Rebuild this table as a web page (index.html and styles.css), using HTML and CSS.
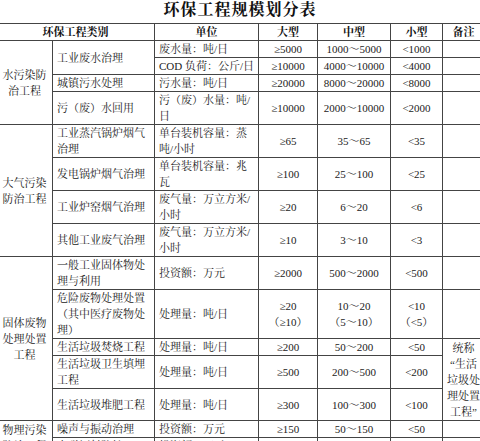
FILE: index.html
```html
<!DOCTYPE html>
<html lang="zh-CN">
<head>
<meta charset="utf-8">
<title>环保工程规模划分表</title>
<link rel="stylesheet" href="styles.css">
</head>
<body>
<h1 class="title">环保工程规模划分表</h1>
<table class="grid">
  <colgroup>
    <col class="w-cat"><col class="w-item"><col class="w-unit"><col class="w-big"><col class="w-mid"><col class="w-small"><col class="w-note">
  </colgroup>
  <thead>
    <tr><th colspan="2">环保工程类别</th><th>单位</th><th>大型</th><th>中型</th><th>小型</th><th>备注</th></tr>
  </thead>
  <tbody>
    <tr>
      <td rowspan="4" class="cat">水污染防<br>治工程</td>
      <td rowspan="2">工业废水治理</td>
      <td>废水量：吨/日</td><td class="num">≥5000</td><td class="num">1000～5000</td><td class="num">&lt;1000</td><td></td>
    </tr>
    <tr><td>COD 负荷：公斤/日</td><td class="num">≥10000</td><td class="num">4000～10000</td><td class="num">&lt;4000</td><td></td></tr>
    <tr><td>城镇污水处理</td><td>污水量：吨/日</td><td class="num">≥20000</td><td class="num">8000～20000</td><td class="num">&lt;8000</td><td></td></tr>
    <tr><td>污（废）水回用</td><td>污（废）水量：吨/<br>日</td><td class="num">≥10000</td><td class="num">2000～10000</td><td class="num">&lt;2000</td><td></td></tr>

    <tr>
      <td rowspan="4" class="cat">大气污染<br>防治工程</td>
      <td>工业蒸汽锅炉烟气<br>治理</td><td>单台装机容量：蒸<br>吨/小时</td><td class="num">≥65</td><td class="num">35～65</td><td class="num">&lt;35</td><td></td>
    </tr>
    <tr><td>发电锅炉烟气治理</td><td>单台装机容量：兆<br>瓦</td><td class="num">≥100</td><td class="num">25～100</td><td class="num">&lt;25</td><td></td></tr>
    <tr><td>工业炉窑烟气治理</td><td>废气量：万立方米/<br>小时</td><td class="num">≥20</td><td class="num">6～20</td><td class="num">&lt;6</td><td></td></tr>
    <tr><td>其他工业废气治理</td><td>废气量：万立方米/<br>小时</td><td class="num">≥10</td><td class="num">3～10</td><td class="num">&lt;3</td><td></td></tr>

    <tr>
      <td rowspan="5" class="cat">固体废物<br>处理处置<br>工程</td>
      <td>一般工业固体物处<br>理与利用</td><td>投资额：万元</td><td class="num">≥2000</td><td class="num">500～2000</td><td class="num">&lt;500</td><td></td>
    </tr>
    <tr><td>危险废物处理处置<br>（其中医疗废物处<br>理）</td><td>处理量：吨/日</td><td class="num">≥20<br>（≥10）</td><td class="num">10～20<br>（5～10）</td><td class="num">&lt;10<br>（&lt;5）</td><td></td></tr>
    <tr><td>生活垃圾焚烧工程</td><td>处理量：吨/日</td><td class="num">≥200</td><td class="num">50～200</td><td class="num">&lt;50</td><td rowspan="3" class="note">统称<br>“生活<br>垃圾处<br>理处置<br>工程”</td></tr>
    <tr><td>生活垃圾卫生填埋<br>工程</td><td>处理量：吨/日</td><td class="num">≥500</td><td class="num">200～500</td><td class="num">&lt;200</td></tr>
    <tr class="tall"><td>生活垃圾堆肥工程</td><td>处理量：吨/日</td><td class="num">≥300</td><td class="num">100～300</td><td class="num">&lt;100</td></tr>

    <tr>
      <td rowspan="2" class="cat">物理污染<br>防治工程</td>
      <td>噪声与振动治理</td><td>投资额：万元</td><td class="num">≥150</td><td class="num">50～150</td><td class="num">&lt;50</td><td></td>
    </tr>
    <tr><td>电磁辐射防护</td><td>投资额：万元</td><td class="num">≥100</td><td class="num">30～100</td><td class="num">&lt;30</td><td></td></tr>
  </tbody>
</table>
</body>
</html>
```

FILE: styles.css
```css
html, body {
  margin: 0;
  padding: 0;
  overflow: hidden;
  background: #fff;
}

body {
  font-family: "Liberation Serif", "Noto Serif CJK SC", "Noto Sans CJK SC", serif;
  font-size: 11px;
  color: #222;
}

.title {
  margin: 0 0 4px;
  font-size: 16px;
  font-weight: bold;
  line-height: 19px;
  letter-spacing: 1px;
  text-align: center;
  color: #111;
}

.grid {
  border-collapse: collapse;
  table-layout: fixed;
  width: 488px;
  margin-left: -4px;
}

.w-cat { width: 56px; }
.w-item { width: 102px; }
.w-unit { width: 104px; }
.w-big { width: 59px; }
.w-mid { width: 73px; }
.w-small { width: 52px; }
.w-note { width: 42px; }

.grid th,
.grid td {
  border: 1px solid #444;
  padding: 0 4px;
  line-height: 16px;
  white-space: nowrap;
  vertical-align: middle;
  text-align: left;
}

.grid th {
  font-weight: bold;
  text-align: center;
  color: #111;
}

.grid td.cat,
.grid td.num,
.grid td.note {
  text-align: center;
}

.grid td.note {
  padding: 0;
}

.grid tr.tall {
  height: 32px;
}
```
